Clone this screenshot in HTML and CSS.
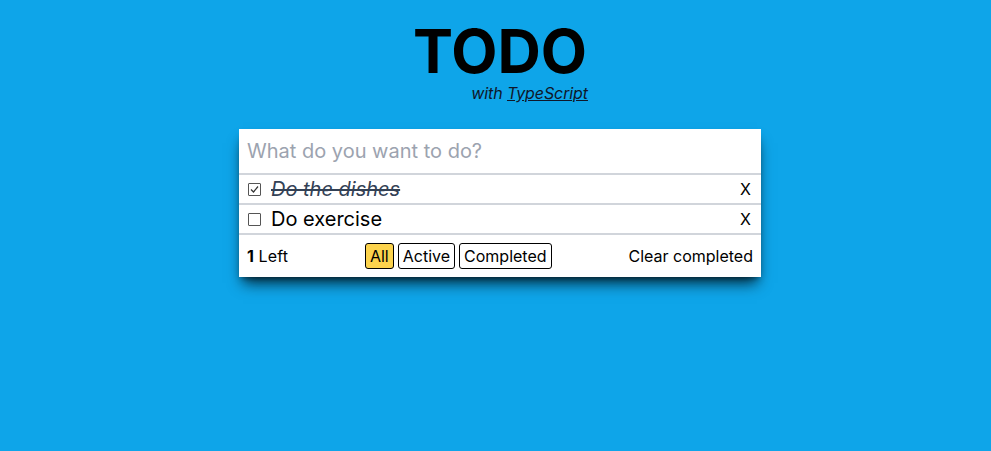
FILE: index.html
```html
<!DOCTYPE html>
<html lang="en">
<head>
<meta charset="utf-8">
<title>TODO</title>
<link rel="stylesheet" href="styles.css">
</head>
<body>
<main class="page">
  <header class="header">
    <div class="brand">
      <h1 class="title">TODO</h1>
      <p class="subtitle">with <a href="#" class="link">TypeScript</a></p>
    </div>
  </header>
  <section class="card">
    <div class="new-todo">What do you want to do?</div>
    <ul class="list">
      <li class="item done">
        <span class="check checked"><svg viewBox="0 0 13 13" width="13" height="13"><path d="M3 6.5 L5.5 9 L10 3.5" fill="none" stroke="#333" stroke-width="1.2"/></svg></span>
        <span class="label">Do the dishes</span>
        <span class="remove">X</span>
      </li>
      <li class="item">
        <span class="check"></span>
        <span class="label">Do exercise</span>
        <span class="remove">X</span>
      </li>
    </ul>
    <footer class="footer">
      <span class="count"><b>1</b> Left</span>
      <div class="filters">
        <button class="filter active">All</button>
        <button class="filter">Active</button>
        <button class="filter">Completed</button>
      </div>
      <span class="clear">Clear completed</span>
    </footer>
  </section>
</main>
</body>
</html>
```
FILE: styles.css
```css
* { box-sizing: border-box; }
html, body { margin: 0; height: 100%; }
body {
  background: #0ea5e9;
  font-family: Inter, "Noto Sans", sans-serif;
  color: #000;
}
.page {
  padding: 21px 0 0 9px;
  display: flex;
  flex-direction: column;
  align-items: center;
}
.header { display: flex; justify-content: center; }
.brand {
  display: inline-flex;
  flex-direction: column;
  align-items: flex-end;
}
.title {
  margin: 0;
  font-size: 60px;
  font-weight: 700;
  line-height: 1;
  letter-spacing: 0;
}
.subtitle {
  margin: 2px -3px 0 0;
  padding-right: 2px;
  font-size: 16px;
  font-style: italic;
  line-height: 20px;
  letter-spacing: -0.1px;
  color: #0f172a;
}
.link { color: #0f172a; }
.card {
  margin-top: 26px;
  width: 522px;
  background: #fff;
  box-shadow: 0 10px 14px -4px rgba(0,0,0,0.75), 0 4px 6px -3px rgba(0,0,0,0.5);
}
.new-todo {
  height: 46px;
  padding: 0 8px;
  display: flex;
  align-items: center;
  font-size: 20px;
  color: #9ca3af;
  border-bottom: 2px solid #d1d5db;
}
.list { list-style: none; margin: 0; padding: 0; }
.item {
  height: 30px;
  padding: 0 10px 0 9px;
  display: flex;
  align-items: center;
  border-bottom: 2px solid #d1d5db;
  font-size: 20px;
}
.check {
  width: 13px;
  height: 13px;
  border: 1px solid #555;
  border-radius: 1px;
  margin-right: 10px;
  display: flex;
  flex: none;
}
.check svg { margin: -1px; }
.label { flex: 1; }
.done .label {
  font-style: italic;
  text-decoration: line-through;
  color: #334155;
}
.remove { font-size: 16px; }
.footer {
  height: 42px;
  padding: 0 8px;
  display: flex;
  align-items: center;
  justify-content: space-between;
  font-size: 16px;
}
.count { letter-spacing: 0.1px; }
.filters { display: flex; gap: 4px; }
.filter {
  font-family: inherit;
  font-size: 16px;
  height: 26px;
  padding: 0 4px;
  background: #fff;
  color: #000;
  border: 1px solid #000;
  border-radius: 3px;
}
.filter.active { background: #fcd34d; }
```
